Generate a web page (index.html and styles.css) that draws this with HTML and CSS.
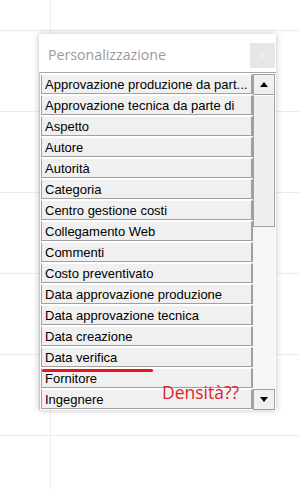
FILE: index.html
```html
<!DOCTYPE html>
<html lang="it">
    <head>
        <meta charset="UTF-8">
        <title>Personalizzazione</title>
        <link rel="stylesheet" href="styles.css">
    </head>
    <body>
        <div class="panel">
            <div class="head">
                <span class="title">Personalizzazione</span>
                <span class="close">&times;</span>
            </div>
            <div class="list">
                <div class="rows">
                    <div class="row">Approvazione produzione da part...</div>
                    <div class="row">Approvazione tecnica da parte di</div>
                    <div class="row">Aspetto</div>
                    <div class="row">Autore</div>
                    <div class="row">Autorità</div>
                    <div class="row">Categoria</div>
                    <div class="row">Centro gestione costi</div>
                    <div class="row">Collegamento Web</div>
                    <div class="row">Commenti</div>
                    <div class="row">Costo preventivato</div>
                    <div class="row">Data approvazione produzione</div>
                    <div class="row">Data approvazione tecnica</div>
                    <div class="row">Data creazione</div>
                    <div class="row">Data verifica</div>
                    <div class="row">Fornitore</div>
                    <div class="row">Ingegnere</div>
                </div>
                <div class="bar">
                    <div class="arrow"><span class="up"></span></div>
                    <div class="thumb"></div>
                    <div class="track"></div>
                    <div class="arrow"><span class="down"></span></div>
                </div>
                <div class="mark"></div>
                <div class="note">Densità??</div>
            </div>
        </div>
    </body>
</html>
```

FILE: styles.css
```css
body {
    margin: 0;
    height: 490px;
    overflow: hidden;
    font-family: "Liberation Sans", "Noto Sans", sans-serif;
    background-color: #fff;
    background-image:
        linear-gradient(90deg, transparent 50px, #ececec 50px, #ececec 51px, transparent 51px),
        linear-gradient(180deg, transparent 30px, #ececec 30px, #ececec 31px, transparent 31px);
    background-size: 100% 100%, 100% 81px;
    background-repeat: no-repeat, repeat-y;
}
.panel {
    margin: 34px 0 0 39px;
    width: 237px;
    height: 376px;
    background: #fff;
    box-shadow: 0 0 6px rgba(0, 0, 0, 0.25);
    display: flex;
    flex-direction: column;
}
.head {
    height: 38px;
    display: flex;
    align-items: center;
    justify-content: space-between;
    padding: 0 1px 0 9px;
}
.title {
    font-family: "Open Sans", "Noto Sans", sans-serif;
    font-size: 14.2px;
    color: #9a9a9a;
    margin-top: 2px;
}
.close {
    width: 25px;
    height: 25px;
    margin-top: 5px;
    background: #e6e6e6;
    color: #f4f4f4;
    font-size: 13px;
    line-height: 25px;
    text-align: center;
}
.list {
    position: relative;
    flex: 1;
    display: flex;
    border-top: 1px solid #a8a8a8;
    border-left: 1px solid #c8c8c8;
    padding: 1px 1px 0 1px;
    overflow: hidden;
}
.rows {
    width: 212px;
}
.row {
    height: 20px;
    line-height: 19px;
    box-sizing: border-box;
    background: #f0f0f0;
    border: 1px solid #a0a0a0;
    border-top: 1px solid #fff;
    border-right-width: 2px;
    padding-left: 3px;
    font-size: 13px;
    color: #000;
    white-space: nowrap;
    overflow: hidden;
    margin-bottom: 1px;
}
.bar {
    width: 22px;
    display: flex;
    flex-direction: column;
}
.arrow {
    height: 21px;
    box-sizing: border-box;
    border: 1px solid #a0a0a0;
    background: #f0f0f0;
    display: flex;
    align-items: center;
    justify-content: center;
}
.up,
.down {
    width: 0;
    height: 0;
    border-left: 4px solid transparent;
    border-right: 4px solid transparent;
}
.up {
    border-bottom: 5px solid #000;
}
.down {
    border-top: 5px solid #000;
}
.thumb {
    height: 132px;
    box-sizing: border-box;
    border: 1px solid #a0a0a0;
    border-top-color: #fff;
    background: #efefef;
}
.track {
    flex: 1;
    background-color: #f6f6f6;
    background-image: radial-gradient(#e2e2e2 0.6px, transparent 0.7px);
    background-size: 2px 2px;
}
.mark {
    position: absolute;
    left: 2px;
    top: 296px;
    width: 111px;
    height: 3px;
    border-radius: 2px;
    background: #e8141a;
}
.note {
    position: absolute;
    left: 122px;
    top: 307px;
    font-family: "Open Sans", "Noto Sans", sans-serif;
    font-size: 17.5px;
    color: #d9262b;
}
```
